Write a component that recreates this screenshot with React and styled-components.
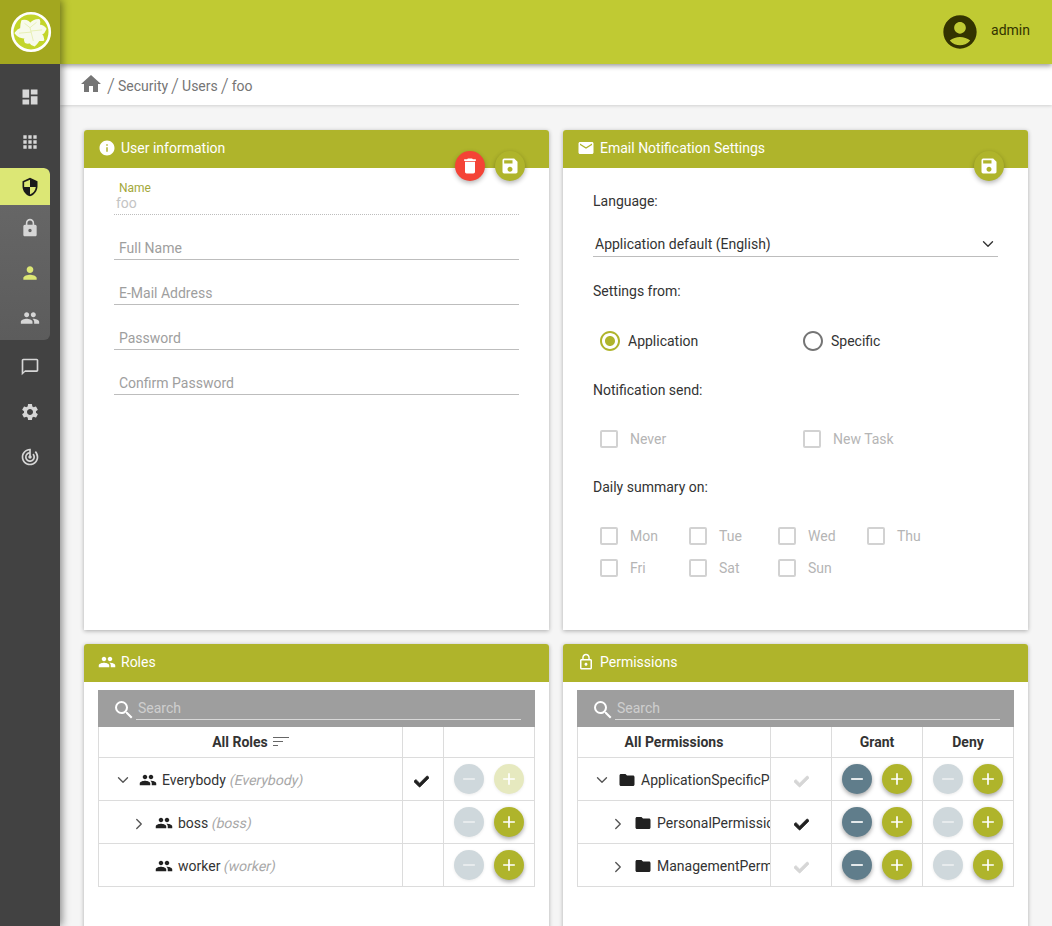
import React from 'react'
import styled, { createGlobalStyle } from 'styled-components'
import { FaCheck } from 'react-icons/fa'
import { ChevronDown, ChevronRight } from 'lucide-react'
import {
  MdAccountCircle,
  MdAdd,
  MdApps,
  MdChatBubbleOutline,
  MdDashboard,
  MdDelete,
  MdEmail,
  MdFolder,
  MdHome,
  MdInfo,
  MdLock,
  MdLockOutline,
  MdPeople,
  MdPerson,
  MdRadioButtonChecked,
  MdRadioButtonUnchecked,
  MdRemove,
  MdSave,
  MdSearch,
  MdSecurity,
  MdSettings,
  MdTrackChanges,
} from 'react-icons/md'

const GlobalStyle = createGlobalStyle`
  html, body {
    margin: 0;
    height: 926px;
    overflow: hidden;
    background: #f5f5f5;
    font-family: Roboto, "Liberation Sans", sans-serif;
    font-size: 14px;
    color: #333;
  }
`

const Page = styled.div`
  display: grid;
  grid-template-columns: 60px 1fr;
  height: 926px;
  overflow: hidden;
`

const Sidebar = styled.aside`
  background: #424242;
  box-shadow: 2px 0 8px rgba(0, 0, 0, 0.45);
  position: relative;
  z-index: 3;
  height: 926px;
`

const LogoBox = styled.div`
  height: 64px;
  background: #a3a71f;
  display: flex;
  align-items: center;
  justify-content: center;
  padding-left: 2px;
`

const Menu = styled.nav`
  display: flex;
  flex-direction: column;
  padding-top: 10px;
`

const MenuItem = styled.div`
  height: ${({ $active }) => ($active ? 37 : 45)}px;
  width: 50px;
  padding-left: 10px;
  box-sizing: border-box;
  display: flex;
  align-items: center;
  justify-content: center;
  font-size: 20px;
  color: ${({ $active, $current }) => ($active ? '#1a1a1a' : $current ? '#dce775' : '#d6d6d6')};
  background: ${({ $active }) => ($active ? '#dce775' : 'transparent')};
  border-radius: ${({ $active }) => ($active ? '0 6px 0 0' : '0')};
`

const SubMenu = styled.div`
  width: 50px;
  margin: 4px 0 4px;
  border-radius: 0 6px 6px 0;
  background: linear-gradient(#5f5f5f, #666 20%, #5c5c5c);
  overflow: hidden;
`

const Main = styled.div`
  display: flex;
  flex-direction: column;
  min-width: 0;
`

const TopBar = styled.header`
  height: 64px;
  background: #c0ca33;
  box-shadow: 0 2px 5px rgba(0, 0, 0, 0.4);
  position: relative;
  z-index: 2;
  display: flex;
  align-items: center;
  justify-content: flex-end;
  padding-right: 22px;
  color: #333300;
  gap: 11px;
`

const UserIcon = styled(MdAccountCircle)`
  font-size: 40px;
`

const UserName = styled.span`
  margin-top: -5px;
`

const Breadcrumb = styled.div`
  height: 38px;
  padding: 3px 0 0 19px;
  background: #fff;
  box-shadow: 0 1px 3px rgba(0, 0, 0, 0.15);
  position: relative;
  z-index: 1;
  display: flex;
  align-items: center;
  color: #757575;
  gap: 3px;
`

const HomeIcon = styled(MdHome)`
  font-size: 24px;
  margin: -5px 1px 0 0;
`

const Slash = styled.span`
  font-size: 20px;
  font-weight: 300;
  margin-top: -1px;
`

const Cards = styled.main`
  display: grid;
  grid-template-columns: 465px 465px;
  grid-template-rows: 500px 400px;
  gap: 14px;
  padding: 25px 0 0 24px;
`

const Card = styled.section`
  background: #fff;
  border-radius: 3px 3px 0 0;
  box-shadow: 0 1px 4px rgba(0, 0, 0, 0.3);
  position: relative;
`

const CardHead = styled.div`
  height: 36px;
  padding: 0 0 2px 14px;
  background: #afb42b;
  border-radius: 3px 3px 0 0;
  color: #fff;
  display: flex;
  align-items: center;
  gap: 5px;
  font-size: 18px;

  svg {
    margin-top: -1px;
  }
`

const CardTitle = styled.span`
  font-size: 14px;
`

const Fabs = styled.div`
  position: absolute;
  top: 21px;
  right: 24px;
  display: flex;
  gap: 10px;
`

const Fab = styled.div`
  width: 30px;
  height: 30px;
  border-radius: 50%;
  background: ${({ $danger }) => ($danger ? '#f44336' : '#afb42b')};
  box-shadow: 0 2px 5px rgba(0, 0, 0, 0.3);
  color: #fff;
  font-size: 20px;
  display: flex;
  align-items: center;
  justify-content: center;
`

const FormBody = styled.div`
  padding: 2px 30px 0;
`

const Field = styled.div`
  height: 45px;
  box-sizing: border-box;
  display: flex;
  flex-direction: column;
  justify-content: flex-end;
  border-bottom: 1px ${({ $readonly }) => ($readonly ? 'dotted' : 'solid')} #bdbdbd;
  padding: 0 5px 2px;
  color: #9e9e9e;
  line-height: 18px;
`

const FloatLabel = styled.label`
  font-size: 12px;
  line-height: 14px;
  color: #a3a83a;
  margin-top: -1px;
`

const ReadValue = styled.span`
  color: #c4c4c4;
  margin: 0 0 1px -3px;
  line-height: 16px;
`

const Settings = styled.div`
  padding: 24px 30px 0;
  display: flex;
  flex-direction: column;
`

const Label = styled.div`
  line-height: 18px;
  margin-bottom: ${({ $gap }) => $gap}px;
`

const Select = styled.div`
  display: flex;
  align-items: center;
  justify-content: space-between;
  height: 25px;
  border-bottom: 1px solid #bdbdbd;
  padding: 0 1px 0 2px;
  margin-bottom: 25px;
  font-size: 14px;
`

const OptionRow = styled.div`
  display: grid;
  grid-template-columns: repeat(${({ $cols }) => $cols}, ${({ $width }) => $width}px);
  row-gap: 14px;
  padding-left: 7px;
  margin-bottom: ${({ $gap }) => $gap}px;
`

const Option = styled.div`
  display: flex;
  align-items: center;
  height: 18px;
  gap: ${({ $radio }) => ($radio ? 6 : 12)}px;
  color: ${({ $radio }) => ($radio ? '#333' : '#b5b5b5')};
`

const RadioOn = styled(MdRadioButtonChecked)`
  font-size: 24px;
  color: #afb42b;
  margin-left: -2px;
`

const RadioOff = styled(MdRadioButtonUnchecked)`
  font-size: 24px;
  color: #757575;
  margin-left: -2px;
`

const CheckBox = styled.span`
  width: 18px;
  height: 18px;
  box-sizing: border-box;
  border: 2px solid #d2d2d2;
  border-radius: 2px;
  flex: none;
`

const TreeBody = styled.div`
  padding: 8px 14px 0;
`

const SearchBar = styled.div`
  height: 37px;
  background: #9e9e9e;
  display: flex;
  align-items: center;
  padding: 0 14px;
  color: #fff;
`

const SearchIcon = styled(MdSearch)`
  font-size: 24px;
  margin-top: 2px;
`

const SearchInput = styled.div`
  flex: 1;
  height: 19px;
  margin-top: 2px;
  border-bottom: 1px solid #d8d8d8;
  color: rgba(255, 255, 255, 0.5);
  padding-left: 2px;
  line-height: 16px;
`

const Table = styled.table`
  width: 100%;
  table-layout: fixed;
  border-collapse: collapse;
`

const Th = styled.th`
  height: 30px;
  padding: 0;
  border: 1px solid #dcdcdc;
  border-top: 0;
  font-weight: 700;
  font-size: 14px;
  color: #333;
  width: ${({ $width }) => ($width ? `${$width}px` : 'auto')};
`

const SortLines = styled.svg`
  width: 16px;
  height: 12px;
  margin: 0 0 0 5px;
  vertical-align: -1px;
  stroke: #666;
  stroke-width: 1;
`

const Td = styled.td`
  height: 42px;
  padding: 0;
  border: 1px solid #dcdcdc;
`

const TreeCell = styled.div`
  display: flex;
  align-items: center;
  overflow: hidden;
  white-space: nowrap;
  padding: 2px 0 0 ${({ $level }) => 15 + $level * 16}px;
`

const Toggle = styled.span`
  width: 18px;
  height: 18px;
  flex: none;
  display: flex;
  align-items: center;
  justify-content: center;
  color: #555;
  margin: ${({ $closed }) => ($closed ? 2 : 0)}px 7px 0 0;
`

const NodeIcon = styled.span`
  flex: none;
  display: flex;
  font-size: 18px;
  margin: -1px 5px 0 0;
  color: #212121;
`

const Hint = styled.span`
  display: inline-block;
  transform: skewX(-12deg);
  color: #a8a8a8;
  margin-left: 4px;
`

const CheckCell = styled.div`
  display: flex;
  justify-content: center;
  color: ${({ $on }) => ($on ? '#212121' : '#d6d6d6')};
  font-size: 15px;
  margin-top: 4px;
  padding-right: ${({ $inset }) => ($inset ? 4 : 0)}px;

  svg {
    stroke: currentColor;
    stroke-width: 24;
  }
`

const Actions = styled.div`
  display: flex;
  justify-content: center;
  gap: 10px;
`

const ActionBtn = styled.div`
  width: 30px;
  height: 30px;
  border-radius: 50%;
  display: flex;
  align-items: center;
  justify-content: center;
  font-size: 20px;
  color: ${({ $off }) => ($off ? 'rgba(255, 255, 255, 0.6)' : '#fff')};
  background: ${({ $kind, $off, $faint }) =>
    $faint ? '#e6e9bf' : $kind === 'minus' ? ($off ? '#cfd8dc' : '#607d8b') : '#afb42b'};
  box-shadow: ${({ $off, $faint }) =>
    $off || $faint ? '0 1px 3px rgba(0, 0, 0, 0.08)' : '0 2px 4px rgba(0, 0, 0, 0.35)'};
`

const Logo = () => (
  <svg width="42" height="42" viewBox="0 0 42 42">
    <circle cx="21" cy="21" r="18.8" fill="#c3d52b" stroke="#fff" strokeWidth="2.6" />
    <g transform="translate(-2 -2) scale(1.1)">
      <path
        fill="#f7faeb"
        stroke="#f7faeb"
        strokeWidth="2"
        strokeLinejoin="round"
        d="M13 11 Q18 10 20 14 Q23 10 28 10 Q29 12 28 15 Q32 15 34 18 Q33 21 30 23 Q32 25 32 28 L28 28 Q26 31 24 33 Q21 32 20 30 Q18 31 16 30 Q15 27 16 26 Q10 26 7 22 Q9 19 12 18 Q12 14 13 11 Z"
      />
      <path stroke="#dbe78a" strokeWidth="0.5" fill="none" d="M20 17 L23 29 M20 17 L15 13 M20 17 L26 12 M21 20 L31 19 M21 21 L10 22" />
    </g>
  </svg>
)

const Btn = ({ kind, off, faint }) => (
  <ActionBtn $kind={kind} $off={off} $faint={faint}>
    {kind === 'minus' ? <MdRemove /> : <MdAdd />}
  </ActionBtn>
)

const roles = [
  { level: 0, toggle: 'open', name: 'Everybody', hint: '(Everybody)', check: true, faint: true },
  { level: 1, toggle: 'closed', name: 'boss', hint: '(boss)' },
  { level: 1, name: 'worker', hint: '(worker)' },
]

const permissions = [
  { level: 0, toggle: 'open', name: 'ApplicationSpecificPermissions', on: false },
  { level: 1, toggle: 'closed', name: 'PersonalPermissions', on: true },
  { level: 1, toggle: 'closed', name: 'ManagementPermissions', on: false },
]

const Node = ({ level, toggle, icon, children }) => (
  <TreeCell $level={level}>
    <Toggle $closed={toggle === 'closed'}>
      {toggle === 'open' && <ChevronDown size={18} strokeWidth={1.8} />}
      {toggle === 'closed' && <ChevronRight size={18} strokeWidth={1.8} />}
    </Toggle>
    <NodeIcon>{icon}</NodeIcon>
    {children}
  </TreeCell>
)

const Search = () => (
  <SearchBar>
    <SearchIcon />
    <SearchInput>Search</SearchInput>
  </SearchBar>
)

const App = () => {
  return (
    <Page>
      <GlobalStyle />
      <Sidebar>
        <LogoBox>
          <Logo />
        </LogoBox>
        <Menu>
          <MenuItem><MdDashboard /></MenuItem>
          <MenuItem><MdApps /></MenuItem>
          <SubMenu>
            <MenuItem $active><MdSecurity /></MenuItem>
            <MenuItem><MdLock /></MenuItem>
            <MenuItem $current><MdPerson /></MenuItem>
            <MenuItem><MdPeople /></MenuItem>
          </SubMenu>
          <MenuItem><MdChatBubbleOutline /></MenuItem>
          <MenuItem><MdSettings /></MenuItem>
          <MenuItem><MdTrackChanges /></MenuItem>
        </Menu>
      </Sidebar>
      <Main>
        <TopBar>
          <UserIcon />
          <UserName>admin</UserName>
        </TopBar>
        <Breadcrumb>
          <HomeIcon />
          <Slash>/</Slash>
          <span>Security</span>
          <Slash>/</Slash>
          <span>Users</span>
          <Slash>/</Slash>
          <span>foo</span>
        </Breadcrumb>
        <Cards>
          <Card>
            <CardHead>
              <MdInfo />
              <CardTitle>User information</CardTitle>
            </CardHead>
            <Fabs>
              <Fab $danger><MdDelete /></Fab>
              <Fab><MdSave /></Fab>
            </Fabs>
            <FormBody>
              <Field $readonly>
                <FloatLabel>Name</FloatLabel>
                <ReadValue>foo</ReadValue>
              </Field>
              <Field>Full Name</Field>
              <Field>E-Mail Address</Field>
              <Field>Password</Field>
              <Field>Confirm Password</Field>
            </FormBody>
          </Card>

          <Card>
            <CardHead>
              <MdEmail />
              <CardTitle>Email Notification Settings</CardTitle>
            </CardHead>
            <Fabs>
              <Fab><MdSave /></Fab>
            </Fabs>
            <Settings>
              <Label $gap={21}>Language:</Label>
              <Select>
                <span>Application default (English)</span>
                <ChevronDown size={18} strokeWidth={1.8} />
              </Select>
              <Label $gap={32}>Settings from:</Label>
              <OptionRow $cols={2} $width={203} $gap={31}>
                <Option $radio><RadioOn />Application</Option>
                <Option $radio><RadioOff />Specific</Option>
              </OptionRow>
              <Label $gap={31}>Notification send:</Label>
              <OptionRow $cols={2} $width={203} $gap={30}>
                <Option><CheckBox />Never</Option>
                <Option><CheckBox />New Task</Option>
              </OptionRow>
              <Label $gap={31}>Daily summary on:</Label>
              <OptionRow $cols={4} $width={89} $gap={0}>
                {['Mon', 'Tue', 'Wed', 'Thu', 'Fri', 'Sat', 'Sun'].map((day) => (
                  <Option key={day}><CheckBox />{day}</Option>
                ))}
              </OptionRow>
            </Settings>
          </Card>

          <Card>
            <CardHead>
              <MdPeople />
              <CardTitle>Roles</CardTitle>
            </CardHead>
            <TreeBody>
              <Search />
              <Table>
                <thead>
                  <tr>
                    <Th>
                      All Roles
                      <SortLines viewBox="0 0 16 12">
                        <path d="M0 1.5h16M0 5.5h10M0 9.5h5" />
                      </SortLines>
                    </Th>
                    <Th $width={40} />
                    <Th $width={90} />
                  </tr>
                </thead>
                <tbody>
                  {roles.map((role) => (
                    <tr key={role.name}>
                      <Td>
                        <Node level={role.level} toggle={role.toggle} icon={<MdPeople />}>
                          {role.name}
                          <Hint>{role.hint}</Hint>
                        </Node>
                      </Td>
                      <Td>{role.check && <CheckCell $on $inset><FaCheck /></CheckCell>}</Td>
                      <Td>
                        <Actions>
                          <Btn kind="minus" off />
                          <Btn kind="plus" faint={role.faint} />
                        </Actions>
                      </Td>
                    </tr>
                  ))}
                </tbody>
              </Table>
            </TreeBody>
          </Card>

          <Card>
            <CardHead>
              <MdLockOutline />
              <CardTitle>Permissions</CardTitle>
            </CardHead>
            <TreeBody>
              <Search />
              <Table>
                <thead>
                  <tr>
                    <Th>All Permissions</Th>
                    <Th $width={60} />
                    <Th $width={90}>Grant</Th>
                    <Th $width={90}>Deny</Th>
                  </tr>
                </thead>
                <tbody>
                  {permissions.map((perm) => (
                    <tr key={perm.name}>
                      <Td>
                        <Node level={perm.level} toggle={perm.toggle} icon={<MdFolder />}>
                          {perm.name}
                        </Node>
                      </Td>
                      <Td><CheckCell $on={perm.on}><FaCheck /></CheckCell></Td>
                      <Td>
                        <Actions>
                          <Btn kind="minus" />
                          <Btn kind="plus" />
                        </Actions>
                      </Td>
                      <Td>
                        <Actions>
                          <Btn kind="minus" off />
                          <Btn kind="plus" />
                        </Actions>
                      </Td>
                    </tr>
                  ))}
                </tbody>
              </Table>
            </TreeBody>
          </Card>
        </Cards>
      </Main>
    </Page>
  )
}

export default App
